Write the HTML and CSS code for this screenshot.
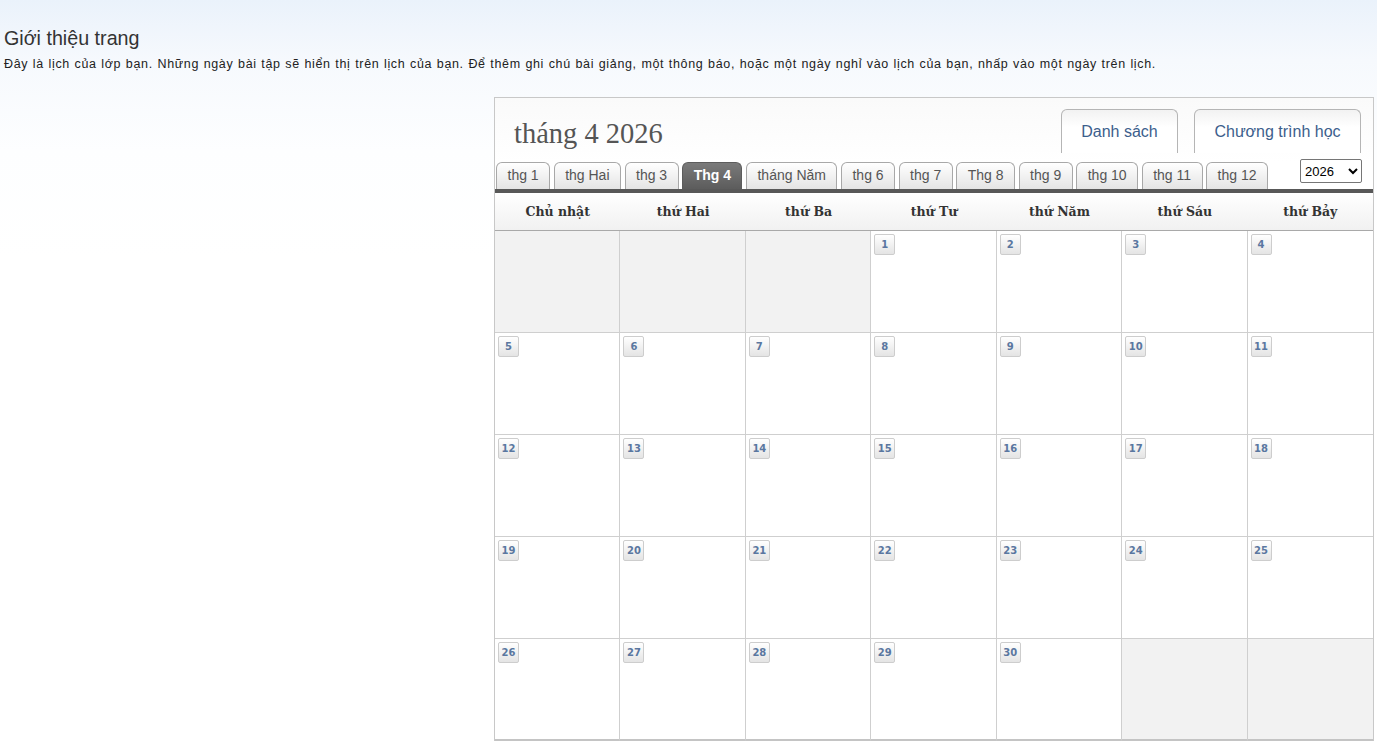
FILE: index.html
```html
<!DOCTYPE html>
<html lang="vi">
<head>
<meta charset="utf-8">
<title>Lịch</title>
<link rel="stylesheet" href="styles.css">
</head>
<body>
<div class="page">
  <h1 class="title">Giới thiệu trang</h1>
  <p class="desc">Đây là lịch của lớp bạn. Những ngày bài tập sẽ hiển thị trên lịch của bạn. Để thêm ghi chú bài giảng, một thông báo, hoặc một ngày nghỉ vào lịch của bạn, nhấp vào một ngày trên lịch.</p>
  <div class="layout">
    <div class="side"></div>
    <div class="cal">
      <div class="cal-top">
        <div class="month">tháng 4 2026</div>
        <div class="views">
          <button class="view">Danh sách</button>
          <button class="view">Chương trình học</button>
        </div>
      </div>
      <div class="tabs">
        <span class="tab">thg 1</span>
        <span class="tab">thg Hai</span>
        <span class="tab">thg 3</span>
        <span class="tab active">Thg 4</span>
        <span class="tab">tháng Năm</span>
        <span class="tab">thg 6</span>
        <span class="tab">thg 7</span>
        <span class="tab">Thg 8</span>
        <span class="tab">thg 9</span>
        <span class="tab">thg 10</span>
        <span class="tab">thg 11</span>
        <span class="tab">thg 12</span>
        <select class="year"><option>2026</option></select>
      </div>
      <div class="bar"></div>
      <div class="head">
        <div>Chủ nhật</div><div>thứ Hai</div><div>thứ Ba</div><div>thứ Tư</div><div>thứ Năm</div><div>thứ Sáu</div><div>thứ Bảy</div>
      </div>
      <div class="grid">
        <div class="cell off"></div><div class="cell off"></div><div class="cell off"></div>
        <div class="cell"><span class="d">1</span></div><div class="cell"><span class="d">2</span></div><div class="cell"><span class="d">3</span></div><div class="cell"><span class="d">4</span></div>
        <div class="cell"><span class="d">5</span></div><div class="cell"><span class="d">6</span></div><div class="cell"><span class="d">7</span></div><div class="cell"><span class="d">8</span></div><div class="cell"><span class="d">9</span></div><div class="cell"><span class="d">10</span></div><div class="cell"><span class="d">11</span></div>
        <div class="cell"><span class="d">12</span></div><div class="cell"><span class="d">13</span></div><div class="cell"><span class="d">14</span></div><div class="cell"><span class="d">15</span></div><div class="cell"><span class="d">16</span></div><div class="cell"><span class="d">17</span></div><div class="cell"><span class="d">18</span></div>
        <div class="cell"><span class="d">19</span></div><div class="cell"><span class="d">20</span></div><div class="cell"><span class="d">21</span></div><div class="cell"><span class="d">22</span></div><div class="cell"><span class="d">23</span></div><div class="cell"><span class="d">24</span></div><div class="cell"><span class="d">25</span></div>
        <div class="cell"><span class="d">26</span></div><div class="cell"><span class="d">27</span></div><div class="cell"><span class="d">28</span></div><div class="cell"><span class="d">29</span></div><div class="cell"><span class="d">30</span></div>
        <div class="cell off"></div><div class="cell off"></div>
      </div>
    </div>
  </div>
</div>
</body>
</html>
```
FILE: styles.css
```css
html, body {
  margin: 0;
  padding: 0;
}
body {
  font-family: "Liberation Sans", Arial, sans-serif;
  color: #333;
  background: linear-gradient(to bottom, #eaf2fb 0px, #f6f9fd 60px, #fdfeff 150px, #ffffff 260px);
  min-height: 746px;
}
.page {
  padding: 27px 0 0 4px;
}
.title {
  margin: 0;
  font-size: 19.7px;
  font-weight: normal;
  line-height: 22px;
  color: #333;
}
.desc {
  margin: 7px 0 0;
  font-size: 12.5px;
  letter-spacing: 0.66px;
  word-spacing: 0.5px;
  line-height: 17px;
  color: #222;
}
.layout {
  display: flex;
  margin-top: 24px;
}
.side {
  width: 490px;
  flex: none;
}
.cal {
  width: 878px;
  border: 1px solid #c8c8c8;
  border-bottom: none;
  background: #fff;
}
.cal-top {
  display: flex;
  justify-content: space-between;
  height: 64px;
  background: linear-gradient(to bottom, #fafafa, #ffffff);
}
.month {
  font-family: "Liberation Serif", "DejaVu Serif", serif;
  font-size: 28.5px;
  color: #555;
  padding: 20px 0 0 19px;
}
.views {
  display: flex;
  gap: 16px;
  padding: 11px 12px 0 0;
  align-items: flex-start;
}
.view {
  height: 44px;
  padding: 0 18px;
  font-family: "Liberation Sans", Arial, sans-serif;
  font-size: 16px;
  color: #3c5e8c;
  background: linear-gradient(to bottom, #f2f2f2 0%, #ffffff 40%, #ffffff 100%);
  border: 1px solid #b5b5b5;
  border-bottom: none;
  border-radius: 6px 6px 0 0;
}
.view:first-child {
  width: 117px;
}
.view:last-child {
  width: 167px;
}
.tabs {
  display: flex;
  align-items: flex-end;
  gap: 3.5px;
  height: 27px;
  padding-left: 1px;
  padding-right: 11px;
}
.tab {
  height: 26px;
  line-height: 25px;
  padding: 0 10.5px;
  font-size: 14px;
  color: #555;
  border: 1px solid #a8a8a8;
  border-bottom: none;
  border-radius: 6px 6px 0 0;
  background: linear-gradient(to bottom, #ffffff, #e4e4e4);
  white-space: nowrap;
}
.tab.active {
  background: linear-gradient(to bottom, #7a7a7a, #5c5c5c);
  border-color: #5c5c5c;
  color: #fff;
  font-weight: bold;
}
.year {
  margin-left: auto;
  align-self: flex-start;
  margin-top: -3px;
  width: 62px;
  height: 24px;
  font-family: "Liberation Sans", Arial, sans-serif;
  font-size: 13px;
  border: 1px solid #767676;
  border-radius: 2px;
  background: #fff;
  color: #000;
}
.bar {
  height: 4px;
  background: #585858;
}
.head {
  display: grid;
  grid-template-columns: repeat(7, 1fr);
  height: 37px;
  border-bottom: 1px solid #a9a9a9;
  background: linear-gradient(to bottom, #ffffff, #f1f1f1);
}
.head div {
  font-family: "DejaVu Serif", "Liberation Serif", serif;
  font-weight: bold;
  font-size: 12.5px;
  color: #333;
  text-align: center;
  line-height: 37px;
}
.grid {
  display: grid;
  grid-template-columns: repeat(7, 1fr);
  grid-auto-rows: 102px;
}
.cell {
  border-right: 1px solid #cfcfcf;
  border-bottom: 1px solid #cfcfcf;
  padding: 3px 0 0 3px;
}
.cell:nth-child(7n) {
  border-right: none;
}
.cell.off {
  background: #f2f2f2;
}
.grid .cell:nth-last-child(-n+7) {
  border-bottom: 2px solid #c4c4c4;
}
.d {
  display: inline-block;
  min-width: 15px;
  height: 19px;
  padding: 0 2px;
  line-height: 20px;
  text-align: center;
  font-family: "DejaVu Sans", Verdana, sans-serif;
  font-size: 10px;
  font-weight: bold;
  color: #5a77a0;
  border: 1px solid #cdcdcd;
  border-radius: 2px;
  background: linear-gradient(to bottom, #ffffff, #e4e4e4);
}
```
